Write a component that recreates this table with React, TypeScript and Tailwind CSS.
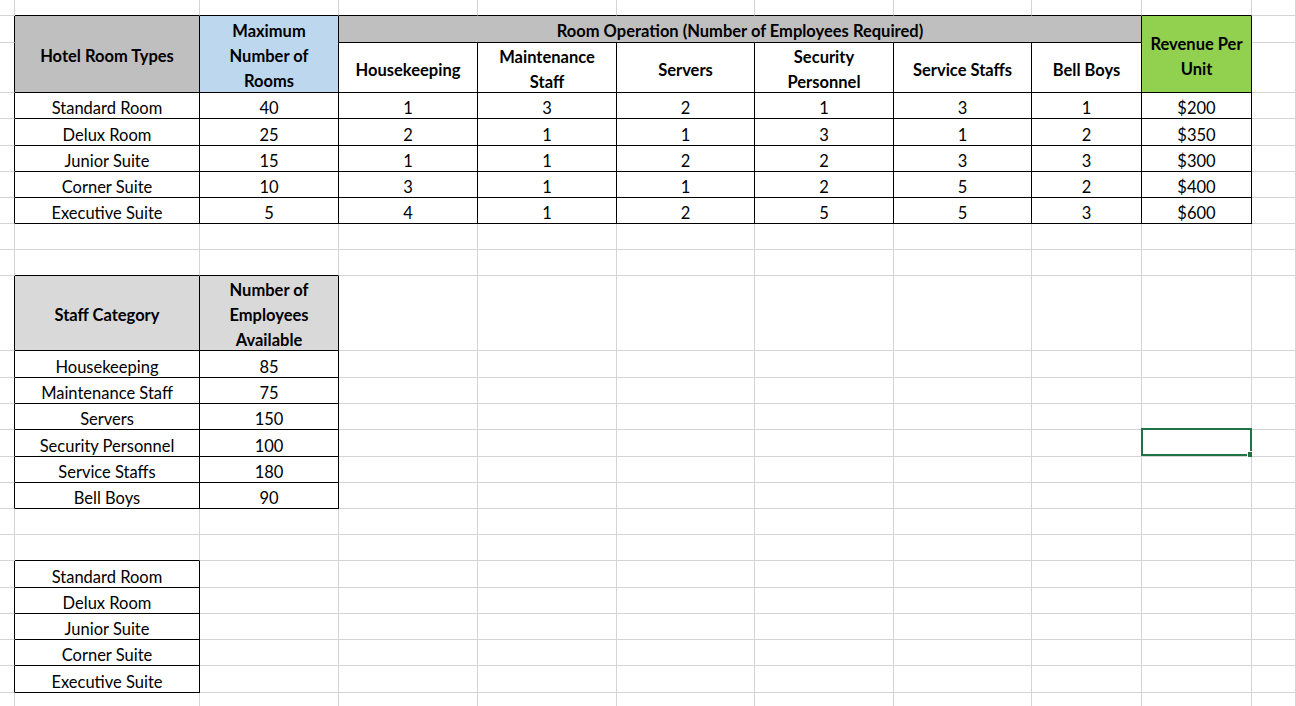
import React from 'react';

type Cell = {
  r: number;
  c: number;
  text: string;
  rs?: number;
  cs?: number;
  head?: boolean;
  bg?: string;
};

const ROWS = 25;
const COLS = 11;

// top table: room types vs. staff needed
const rooms = [
  ['Standard Room', '40', '1', '3', '2', '1', '3', '1', '$200'],
  ['Delux Room', '25', '2', '1', '1', '3', '1', '2', '$350'],
  ['Junior Suite', '15', '1', '1', '2', '2', '3', '3', '$300'],
  ['Corner Suite', '10', '3', '1', '1', '2', '5', '2', '$400'],
  ['Executive Suite', '5', '4', '1', '2', '5', '5', '3', '$600'],
];

const staff = [
  ['Housekeeping', '85'],
  ['Maintenance Staff', '75'],
  ['Servers', '150'],
  ['Security Personnel', '100'],
  ['Service Staffs', '180'],
  ['Bell Boys', '90'],
];

const subHeads = ['Housekeeping', 'Maintenance\nStaff', 'Servers', 'Security\nPersonnel', 'Service Staffs', 'Bell Boys'];

const cells: Cell[] = [
  { r: 1, c: 1, rs: 2, text: 'Hotel Room Types', head: true, bg: 'bg-[#bfbfbf]' },
  { r: 1, c: 2, rs: 2, text: 'Maximum\nNumber of\nRooms', head: true, bg: 'bg-[#bdd7ee]' },
  { r: 1, c: 3, cs: 6, text: 'Room Operation (Number of Employees Required)', head: true, bg: 'bg-[#bfbfbf]' },
  { r: 1, c: 9, rs: 2, text: 'Revenue Per\nUnit', head: true, bg: 'bg-[#92d050]' },
  ...subHeads.map((t, i) => ({ r: 2, c: 3 + i, text: t, head: true })),
  ...rooms.flatMap((row, ri) => row.map((t, ci) => ({ r: 3 + ri, c: 1 + ci, text: t }))),
  { r: 10, c: 1, text: 'Staff Category', head: true, bg: 'bg-[#d9d9d9]' },
  { r: 10, c: 2, text: 'Number of\nEmployees\nAvailable', head: true, bg: 'bg-[#d9d9d9]' },
  ...staff.flatMap((row, ri) => row.map((t, ci) => ({ r: 11 + ri, c: 1 + ci, text: t }))),
  ...rooms.map((row, ri) => ({ r: 19 + ri, c: 1, text: row[0] })),
];

// which grid squares belong to a boxed (black bordered) table
const boxed: boolean[][] = Array.from({ length: ROWS + 1 }, () => Array(COLS + 1).fill(false));
const owner: (Cell | null)[][] = Array.from({ length: ROWS }, () => Array(COLS).fill(null));
const covered: boolean[][] = Array.from({ length: ROWS }, () => Array(COLS).fill(false));
cells.forEach((cell) => {
  const rs = cell.rs ?? 1;
  const cs = cell.cs ?? 1;
  owner[cell.r][cell.c] = cell;
  for (let r = cell.r; r < cell.r + rs; r++)
    for (let c = cell.c; c < cell.c + cs; c++) {
      boxed[r][c] = true;
      covered[r][c] = true;
    }
});

const rowSpan: Record<number, string> = { 1: '', 2: 'row-span-2' };
const colSpan: Record<number, string> = { 1: '', 6: 'col-span-6' };

const SelectedCell = () => (
  <div className="pointer-events-none absolute -top-[2px] -left-px -right-px bottom-0 border-2 border-[#217346]">
    <div className="absolute -right-[4px] -bottom-[4px] h-[7px] w-[7px] border border-white bg-[#217346]" />
  </div>
);

export default function App() {
  const items: React.ReactNode[] = [];

  for (let r = 0; r < ROWS; r++) {
    for (let c = 0; c < COLS; c++) {
      const cell = owner[r][c];
      if (covered[r][c] && !cell) continue;

      const isBoxed = boxed[r][c];
      const rightBlack = isBoxed || (c + 1 < COLS && boxed[r][c + 1]);
      const bottomBlack = isBoxed || boxed[r + 1][c];
      const isSelected = r === 14 && c === 9;

      items.push(
        <div
          key={`${r}-${c}`}
          className={[
            'relative flex min-w-0 justify-center overflow-visible border-r border-b text-center',
            rightBlack ? 'border-r-black' : 'border-r-[#d4d4d4]',
            bottomBlack ? 'border-b-black' : 'border-b-[#d4d4d4]',
            cell ? rowSpan[cell.rs ?? 1] : '',
            cell ? colSpan[cell.cs ?? 1] : '',
            cell?.bg ?? 'bg-white',
            cell?.head
              ? 'items-center pt-[5px] font-bold leading-[25px] whitespace-pre-line'
              : 'items-end leading-[19px] whitespace-nowrap',
          ].join(' ')}
        >
          {cell && <span>{cell.text}</span>}
          {isSelected && <SelectedCell />}
        </div>
      );
    }
  }

  return (
    <div
      className="h-[706px] w-[1296px] overflow-hidden bg-white text-[16.5px] text-black"
      style={{ fontFamily: 'Lato, "Liberation Sans", sans-serif' }}
    >
      <div className="grid grid-cols-[15px_185px_139px_139px_139px_138px_139px_138px_110px_110px_44px] grid-rows-[16px_27px_50px_26px_27px_26px_26px_26px_26px_26px_75px_27px_26px_26px_27px_26px_26px_26px_26px_27px_26px_26px_26px_27px_27px]">
        {items}
      </div>
    </div>
  );
}
